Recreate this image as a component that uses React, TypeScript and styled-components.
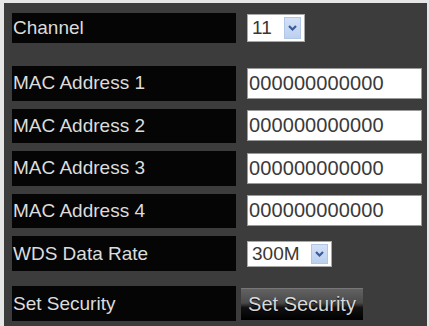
import { createGlobalStyle } from 'styled-components';
import styled from 'styled-components';

const GlobalStyle = createGlobalStyle`
	html, body {
		margin: 0;
		padding: 0;
		background-color: #e6e6e6;
		font-family: 'Liberation Sans', Arial, sans-serif;
	}
`;

const Panel = styled.div`
	margin: 3px 2px 0 4px;
	min-height: 323px;
	box-sizing: border-box;
	padding: 10px 0 0 8px;
	background-color: #3c3c3c;
	display: flex;
	flex-direction: column;
`;

const Row = styled.div<{ $height: number; $gap: number }>`
	display: grid;
	grid-template-columns: 224px 1fr;
	column-gap: 11px;
	height: ${(props) => props.$height}px;
	margin-bottom: ${(props) => props.$gap}px;
`;

const Label = styled.div`
	display: flex;
	align-items: center;
	padding-left: 1px;
	background-color: #050505;
	color: #dcdcdc;
	font-size: 19px;
	white-space: nowrap;
`;

const Value = styled.div`
	display: flex;
	align-items: center;
`;

const SelectBox = styled.div<{ $width: number; $height: number }>`
	display: flex;
	align-items: center;
	justify-content: space-between;
	box-sizing: border-box;
	width: ${(props) => props.$width}px;
	height: ${(props) => props.$height}px;
	padding: 2px 3px 2px 4px;
	background-color: #fff;
	border: 1px solid #a8a8a8;
	color: #3d3630;
	font-size: 19px;
`;

const DropButton = styled.span`
	display: flex;
	align-items: center;
	justify-content: center;
	width: 17px;
	height: 100%;
	box-sizing: border-box;
	background: linear-gradient(#d3e1f6, #bcd0ef);
	border: 1px solid #b2c6e8;
`;

const TextInput = styled.div`
	display: flex;
	align-items: center;
	box-sizing: border-box;
	width: 175px;
	height: 31px;
	padding-left: 1px;
	background-color: #fff;
	border: 1px solid #9a9a9a;
	color: #3a3a3a;
	font-size: 20px;
	letter-spacing: 0.1px;
`;

const SecurityButton = styled.div`
	display: flex;
	align-items: center;
	justify-content: center;
	box-sizing: border-box;
	width: 122px;
	height: 32px;
	margin-left: -6px;
	background: linear-gradient(#626262 0%, #4a4a4a 45%, #111 60%, #000 100%);
	border-top: 1px solid #777;
	color: #d8d8d8;
	font-size: 20px;
	text-shadow: 0 1px 1px #000;
`;

const Chevron = () => (
	<svg width="9" height="6" viewBox="0 0 9 6">
		<path d="M1 1 L4.5 4.5 L8 1" fill="none" stroke="#3b5c9c" strokeWidth="2.2" />
	</svg>
);

const Select = ({ value, width, height }: { value: string; width: number; height: number }) => (
	<SelectBox $width={width} $height={height}>
		<span>{value}</span>
		<DropButton>
			<Chevron />
		</DropButton>
	</SelectBox>
);

const macs = ['MAC Address 1', 'MAC Address 2', 'MAC Address 3', 'MAC Address 4'];

const App = () => {
	return (
		<>
			<GlobalStyle />
			<Panel>
				<Row $height={30} $gap={23}>
					<Label>Channel</Label>
					<Value>
						<Select value="11" width={58} height={28} />
					</Value>
				</Row>
				{macs.map((m) => (
					<Row key={m} $height={34.5} $gap={8}>
						<Label>{m}</Label>
						<Value>
							<TextInput>000000000000</TextInput>
						</Value>
					</Row>
				))}
				<Row $height={35} $gap={15}>
					<Label>WDS Data Rate</Label>
					<Value>
						<Select value="300M" width={85} height={26} />
					</Value>
				</Row>
				<Row $height={35} $gap={0}>
					<Label>Set Security</Label>
					<Value>
						<SecurityButton>Set Security</SecurityButton>
					</Value>
				</Row>
			</Panel>
		</>
	);
};

export default App;
